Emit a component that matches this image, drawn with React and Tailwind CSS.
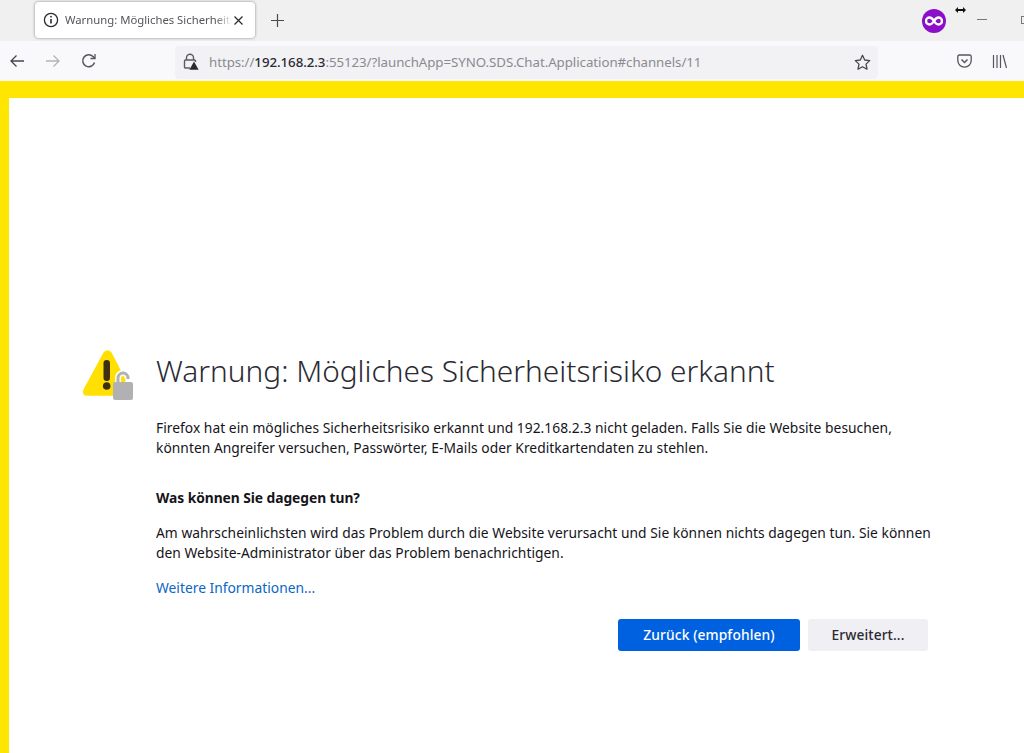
import React from "react";

const font = { fontFamily: '"Noto Sans", "Open Sans", sans-serif' };

function InfoIcon() {
  return (
    <svg width="16" height="16" viewBox="0 0 16 16" fill="none" stroke="#2b2a33" strokeWidth="1.3">
      <circle cx="8" cy="8" r="6.6" />
      <path d="M8 7v4.6" strokeWidth="1.6" />
      <circle cx="8" cy="4.7" r="0.9" fill="#2b2a33" stroke="none" />
    </svg>
  );
}

function LockWarn() {
  return (
    <svg width="18" height="18" viewBox="0 0 18 18" fill="none">
      <path d="M4.5 7V4.8a3.5 3.5 0 0 1 7 0V7" stroke="#5b5b66" strokeWidth="1.4" />
      <path d="M8 15H3.5a1 1 0 0 1-1-1V8a1 1 0 0 1 1-1h9a1 1 0 0 1 1 1v1" stroke="#5b5b66" strokeWidth="1.4" />
      <path d="M12 8.5l4.6 8.2H7.4z" fill="#2b2a33" />
    </svg>
  );
}

function WarningIcon() {
  return (
    <svg width="54" height="50" viewBox="0 0 54 50" fill="none">
      <path d="M23 3 L3 40 Q1 45 7 45 H36 L44 30 L30 3 Q26.500 -1 23 3Z" fill="#ffe000" stroke="#ffe000" strokeWidth="1.500" strokeLinejoin="round" />
      <rect x="22.500" y="10" width="6.500" height="21" rx="3.200" fill="#3f2f10" />
      <circle cx="25.700" cy="36" r="3.800" fill="#3f2f10" />
      <path d="M37 33v-5a5 5 0 0 1 10 0v1" stroke="#fff" strokeWidth="6" />
      <path d="M37 33v-5a5 5 0 0 1 10 0v1" stroke="#b1b1b3" strokeWidth="3" />
      <rect x="32" y="32" width="20" height="18" rx="2" fill="#b1b1b3" />
    </svg>
  );
}

export default function App() {
  return (
    <div className="w-[1024px] h-[753px] overflow-hidden flex flex-col bg-white text-[#15141a]" style={font}>
      <div className="h-[41px] bg-[#f0f0f0] flex items-start pl-[35px] pt-[2px]">
        <div className="w-[220px] h-[36px] bg-white rounded-[4px] shadow-[0_0_3px_rgba(0,0,0,0.45)] flex items-center pl-[8px] pr-[9px]">
          <InfoIcon />
          <span className="ml-[6px] w-[167px] h-[16px] leading-[16px] overflow-hidden whitespace-nowrap text-[11.300px] text-[#55555c] [mask-image:linear-gradient(to_right,black_90%,transparent)]">Warnung: Mögliches Sicherheitsrisiko</span>
          <svg className="ml-[1px]" width="11" height="11" viewBox="0 0 11 11" stroke="#2b2a33" strokeWidth="1.200"><path d="M1.500 1.500l8 8M9.500 1.500l-8 8" /></svg>
        </div>
        <svg className="ml-[16px] mt-[12px]" width="13" height="13" viewBox="0 0 13 13" stroke="#4a4a52" strokeWidth="1.200"><path d="M6.500 0v13M0 6.500h13" /></svg>
        <div className="ml-auto -mr-[3px] flex items-start">
          <div className="mt-[7px] w-[24px] h-[24px] rounded-full bg-[#8b0fc9] flex items-center justify-center">
            <svg width="18" height="10" viewBox="0 0 18 10" fill="none" stroke="#fff" strokeWidth="2.400"><path d="M9 5C7.500 2.500 6 1.500 4.500 1.500a3.500 3.500 0 0 0 0 7C6 8.500 7.500 7.500 9 5c1.500-2.500 3-3.500 4.500-3.500a3.500 3.500 0 0 1 0 7C12 8.500 10.500 7.500 9 5z" /></svg>
          </div>
          <svg className="ml-[9px] mt-[4px]" width="11" height="8" viewBox="0 0 11 8" fill="#111"><path d="M0 4l3-3v2h5V1l3 3-3 3V5H3v2z" /></svg>
          <div className="ml-[11px] mt-[17px] w-[10px] h-px bg-[#777]" />
          <div className="ml-[34px] mt-[14px] w-[6px] h-[8px] border border-[#777] border-r-0" />
        </div>
      </div>

      <div className="h-[40px] bg-[#f9f9fb] flex items-center pl-[10px]">
        <svg width="14" height="14" viewBox="0 0 14 14" fill="none" stroke="#45454d" strokeWidth="1.300"><path d="M14 7H1M6.500 1.500L1 7l5.500 5.500" /></svg>
        <svg className="ml-[22px]" width="14" height="14" viewBox="0 0 14 14" fill="none" stroke="#b4b4b8" strokeWidth="1.300"><path d="M0 7h13M7.500 1.500L13 7l-5.500 5.500" /></svg>
        <svg className="ml-[21px]" width="16" height="16" viewBox="0 0 16 16" fill="none" stroke="#55555c" strokeWidth="1.500"><path d="M13.500 9.500A6 6 0 1 1 12 3.500L14 5.500" /><path d="M14 1v4.500H9.500" strokeWidth="1.300" /></svg>
        <div className="ml-[78px] mt-[2px] w-[703px] h-[33px] bg-[#f2f2f5] rounded-[4px] flex items-center pl-[7px] pr-[7px]">
          <LockWarn />
          <span className="ml-[9px] mt-[1px] text-[13.300px] tracking-[-0.060px] text-[#8a8a90] whitespace-nowrap">
            https://<span className="text-[#2b2a33] font-medium">192.168.2.3</span>:55123/?launchApp=SYNO.SDS.Chat.Application#channels/11
          </span>
          <svg className="ml-auto" width="17" height="17" viewBox="0 0 17 17" fill="none" stroke="#45454d" strokeWidth="1.300" strokeLinejoin="round"><path d="M8.500 1.300l2.200 4.700 5 .6-3.700 3.500 1 5.100-4.500-2.500-4.500 2.500 1-5.100L1.300 6.600l5-.6z" /></svg>
        </div>
        <svg className="ml-[79px]" width="15" height="14" viewBox="0 0 15 14" fill="none" stroke="#55555c" strokeWidth="1.300"><path d="M2.300 1h10.400A1.500 1.500 0 0 1 14.200 2.500V6.500a6.700 6.700 0 0 1-13.400 0V2.500A1.500 1.500 0 0 1 2.300 1z" /><path d="M4.500 5.500L7.500 8.500l3-3" strokeWidth="1.500" /></svg>
        <svg className="ml-[20px]" width="15" height="15" viewBox="0 0 15 15" fill="none" stroke="#55555c" strokeWidth="1.200"><path d="M1.500 1v13M5 1v13M8.500 1v13M11 1l3.500 13" /></svg>
      </div>

      <div className="h-[17px] bg-[#ffe600]" />

      <div className="flex-1 flex border-l-[9px] border-[#ffe600] bg-white">
        <div className="w-[73px] ml-[72px] pt-[252px] flex justify-start shrink-0">
          <WarningIcon />
        </div>
        <div className="pl-[2px] pt-[251px] w-[790px]">
          <h1 className="text-[29.800px] leading-[44px] font-light tracking-[0.010px] text-[#2b2a33] whitespace-nowrap">Warnung: Mögliches Sicherheitsrisiko erkannt</h1>
          <p className="mt-[25px] text-[13.800px] leading-[20px] tracking-[0.030px] text-[#15141a] whitespace-nowrap">
            Firefox hat ein mögliches Sicherheitsrisiko erkannt und 192.168.2.3 nicht geladen. Falls Sie die Website besuchen,<br />
            könnten Angreifer versuchen, Passwörter, E-Mails oder Kreditkartendaten zu stehlen.
          </p>
          <h2 className="mt-[29px] text-[13.800px] leading-[21px] font-bold tracking-[-0.050px]">Was können Sie dagegen tun?</h2>
          <p className="mt-[15px] text-[13.800px] leading-[20px] tracking-[0.030px] whitespace-nowrap">
            Am wahrscheinlichsten wird das Problem durch die Website verursacht und Sie können nichts dagegen tun. Sie können<br />
            den Website-Administrator über das Problem benachrichtigen.
          </p>
          <a className="block mt-[14px] text-[13.800px] leading-[21px] tracking-[0.010px] text-[#0b66c6]">Weitere Informationen...</a>
          <div className="mt-[21px] flex justify-end gap-[8px] w-[772px]">
            <button className="w-[182px] h-[32px] rounded-[3px] bg-[#0061e0] text-white text-[13.800px] font-medium tracking-[0.100px]">Zurück (empfohlen)</button>
            <button className="w-[120px] h-[32px] rounded-[3px] bg-[#f0f0f4] text-[#2b2a33] text-[13.800px] font-medium tracking-[0.100px]">Erweitert...</button>
          </div>
        </div>
      </div>
    </div>
  );
}
